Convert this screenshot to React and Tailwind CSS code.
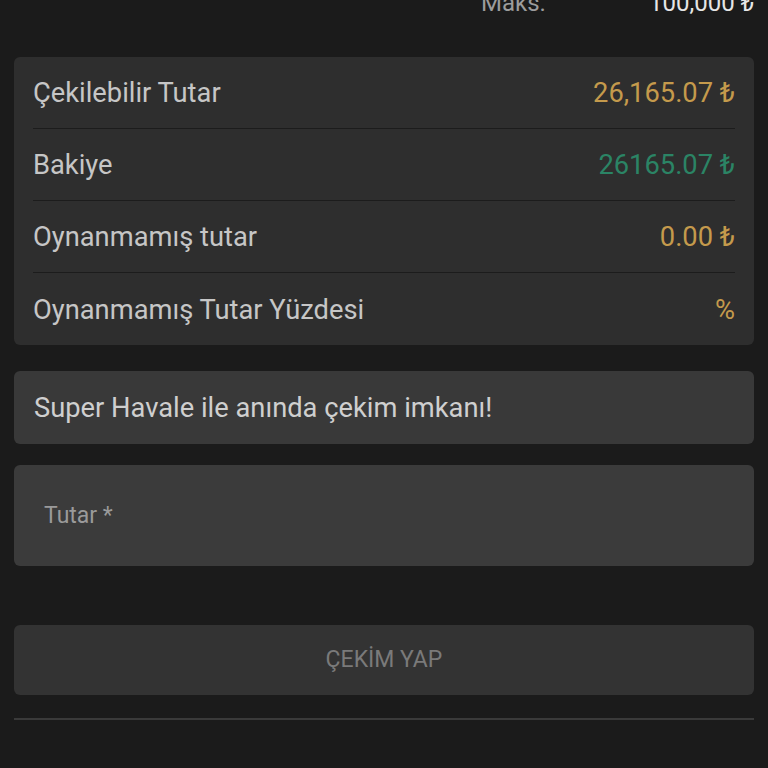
import React from 'react';

const rows = [
  { label: 'Çekilebilir Tutar', value: '26,165.07 ₺', color: 'text-[#c49a4c]' },
  { label: 'Bakiye', value: '26165.07 ₺', color: 'text-[#2b8465]' },
  { label: 'Oynanmamış tutar', value: '0.00 ₺', color: 'text-[#c49a4c]' },
  { label: 'Oynanmamış Tutar Yüzdesi', value: '%', color: 'text-[#c49a4c]' },
];

export default function App() {
  return (
    <div className="min-h-[768px] bg-[#1b1b1b] px-[14px] overflow-hidden" style={{ fontFamily: 'Roboto, "Noto Sans", sans-serif' }}>
      <div className="-mt-[17px] flex h-[40px] items-center text-[24px]">
        <span className="ml-[467px] text-[#9c9c9c]">Maks.</span>
        <span className="ml-auto text-[#e6e6e6]">100,000 ₺</span>
      </div>

      <div className="mt-[34px] rounded-[6px] bg-[#2e2e2e] px-[19px]">
        {rows.map((row, i) => (
          <div
            key={row.label}
            className={`flex items-center justify-between pt-[2px] text-[27.3px] ${i < rows.length - 1 ? 'h-[72px] border-b border-[#1c1c1c]' : 'h-[72px]'}`}
          >
            <span className="text-[#c6c6c6]">{row.label}</span>
            <span className={row.color}>{row.value}</span>
          </div>
        ))}
      </div>

      <div className="mt-[26px] flex h-[73px] items-center rounded-[6px] bg-[#393939] px-[20px] pt-[2px] text-[27.3px] text-[#cfcfcf]">
        Super Havale ile anında çekim imkanı!
      </div>

      <div className="mt-[21px] flex h-[101px] items-center rounded-[6px] bg-[#3b3b3b] px-[30px] pt-[2px] text-[23px] text-[#9a9a9a]">
        Tutar *
      </div>

      <button className="mt-[59px] flex h-[70px] w-full items-center justify-center rounded-[6px] bg-[#333333] text-[23px] text-[#7a7a7a]">
        ÇEKİM YAP
      </button>

      <div className="mt-[23px] h-[2px] bg-[#3a3a3a]" />
    </div>
  );
}
